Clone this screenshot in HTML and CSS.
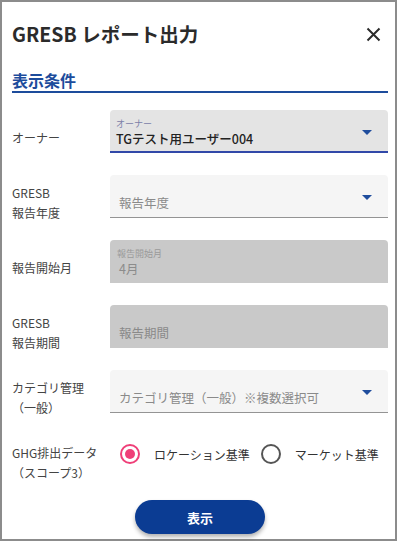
FILE: index.html
```html
<!DOCTYPE html>
<html lang="ja">
<head>
    <meta charset="UTF-8">
    <meta name="viewport" content="width=device-width, initial-scale=1.0">
    <title>GRESB レポート出力</title>
    <link rel="stylesheet" href="styles.css">
</head>
<body>
    <div class="dialog">
        <div class="dialog-head">
            <h1 class="dialog-title">GRESB レポート出力</h1>
            <button class="close-btn" type="button" aria-label="閉じる">
                <svg width="15" height="15" viewBox="0 0 15 15">
                    <path d="M1.5 1.5 L13.5 13.5 M13.5 1.5 L1.5 13.5" stroke="#2b2b2b" stroke-width="2" fill="none"/>
                </svg>
            </button>
        </div>

        <h2 class="section-title">表示条件</h2>

        <form class="cond-form" id="condForm">
            <div class="form-row">
                <div class="row-label">オーナー</div>
                <div class="row-field">
                    <div class="field is-focused">
                        <div class="field-text has-float">
                            <span class="float-label">オーナー</span>
                            <span class="field-value">TGテスト用ユーザー004</span>
                        </div>
                        <span class="select-arrow"></span>
                    </div>
                </div>
            </div>

            <div class="form-row">
                <div class="row-label">GRESB<br>報告年度</div>
                <div class="row-field">
                    <div class="field">
                        <div class="field-text">
                            <span class="placeholder">報告年度</span>
                        </div>
                        <span class="select-arrow"></span>
                    </div>
                </div>
            </div>

            <div class="form-row">
                <div class="row-label">報告開始月</div>
                <div class="row-field">
                    <div class="field is-disabled">
                        <div class="field-text has-float">
                            <span class="float-label">報告開始月</span>
                            <span class="field-value">4月</span>
                        </div>
                    </div>
                </div>
            </div>

            <div class="form-row">
                <div class="row-label">GRESB<br>報告期間</div>
                <div class="row-field">
                    <div class="field is-disabled">
                        <div class="field-text">
                            <span class="placeholder">報告期間</span>
                        </div>
                    </div>
                </div>
            </div>

            <div class="form-row">
                <div class="row-label">カテゴリ管理<br>（一般）</div>
                <div class="row-field">
                    <div class="field">
                        <div class="field-text">
                            <span class="placeholder">カテゴリ管理（一般）※複数選択可</span>
                        </div>
                        <span class="select-arrow"></span>
                    </div>
                </div>
            </div>

            <div class="form-row">
                <div class="row-label">GHG排出データ<br>（スコープ3）</div>
                <div class="row-field">
                    <div class="radio-group">
                        <label class="radio">
                            <input type="radio" name="ghg" value="location" checked>
                            <span>ロケーション基準</span>
                        </label>
                        <label class="radio">
                            <input type="radio" name="ghg" value="market">
                            <span>マーケット基準</span>
                        </label>
                    </div>
                </div>
            </div>

            <button class="submit-btn" type="submit">表示</button>
        </form>
    </div>
</body>
</html>
```

FILE: styles.css
```css
body {
    margin: 0;
    padding: 0;
    background-color: #fff;
    font-family: "Noto Sans CJK JP", "Noto Sans", sans-serif;
    color: #444;
}

.dialog {
    width: 397px;
    height: 541px;
    box-sizing: border-box;
    border: 2px solid #8c8c8c;
    padding: 0 7px 0 10px;
    background: #fff;
}

.dialog-head {
    display: flex;
    align-items: center;
    justify-content: space-between;
    padding-top: 18px;
}

.dialog-title {
    margin: 0;
    font-size: 19.5px;
    line-height: 28px;
    font-weight: bold;
    color: #2b2b2b;
}

.close-btn {
    display: flex;
    padding: 0;
    margin-right: 7px;
    border: none;
    background: none;
    cursor: pointer;
}

.section-title {
    margin: 22px 0 0;
    padding-bottom: 1px;
    font-size: 16px;
    line-height: 20px;
    font-weight: bold;
    color: #1d4c9c;
    border-bottom: 2px solid #1d4c9c;
}

.cond-form {
    padding-top: 17px;
}

.form-row {
    display: grid;
    grid-template-columns: 98px 1fr;
    align-items: center;
    margin-bottom: 9px;
}

.row-label {
    font-size: 12px;
    line-height: 20px;
    color: #444;
}

.row-field {
    padding-bottom: 13px;
}

.field {
    display: flex;
    height: 43px;
    box-sizing: border-box;
    border-radius: 4px 4px 0 0;
    background-color: #f5f5f5;
    border-bottom: 1px solid #949494;
}

.field.is-focused {
    background-color: #e4e4e4;
    border-bottom: 2px solid #3148a8;
}

.field.is-disabled {
    background-color: #c9c9c9;
    border-bottom: none;
}

.field-text {
    flex: 1;
    display: flex;
    flex-direction: column;
    padding: 20px 0 0 9px;
}

.field-text.has-float {
    padding: 8px 0 0 6px;
}

.float-label {
    font-size: 9px;
    line-height: 12px;
    color: #7b80a8;
}

.field-value {
    font-size: 12.5px;
    line-height: 18px;
    font-weight: 500;
    color: #222;
}

.placeholder {
    font-size: 12.5px;
    line-height: 16px;
    color: #8a8a8a;
}

.is-disabled .float-label {
    color: #9a9a9a;
    padding-left: 1px;
}

.is-disabled .field-value {
    font-weight: normal;
    color: #8c8c8c;
    padding-left: 3px;
}

.select-arrow {
    align-self: flex-start;
    width: 0;
    height: 0;
    margin: 20px 16px 0 0;
    border-left: 5px solid transparent;
    border-right: 5px solid transparent;
    border-top: 5px solid #1f4d9d;
}

.radio-group {
    display: flex;
    align-items: center;
    height: 38px;
    padding-left: 10px;
    margin-bottom: 5px;
    white-space: nowrap;
}

.radio {
    display: flex;
    align-items: center;
    font-size: 12px;
    color: #333;
    margin-right: 11px;
    cursor: pointer;
}

.radio input {
    appearance: none;
    -webkit-appearance: none;
    position: relative;
    flex: none;
    width: 20px;
    height: 20px;
    margin: 0 14px 0 0;
    box-sizing: border-box;
    border: 2px solid #555;
    border-radius: 50%;
}

.radio input:checked {
    border-color: #ef3f78;
}

.radio input:checked::after {
    content: "";
    position: absolute;
    top: 3px;
    left: 3px;
    width: 10px;
    height: 10px;
    border-radius: 50%;
    background-color: #ef3f78;
}

.submit-btn {
    display: block;
    width: 130px;
    height: 34px;
    margin: 0 auto;
    border: none;
    border-radius: 17px;
    background-color: #0b3c93;
    color: #fff;
    font-family: inherit;
    font-size: 13px;
    font-weight: bold;
    box-shadow: 0 3px 4px rgba(0, 0, 0, 0.3);
    cursor: pointer;
}
```
